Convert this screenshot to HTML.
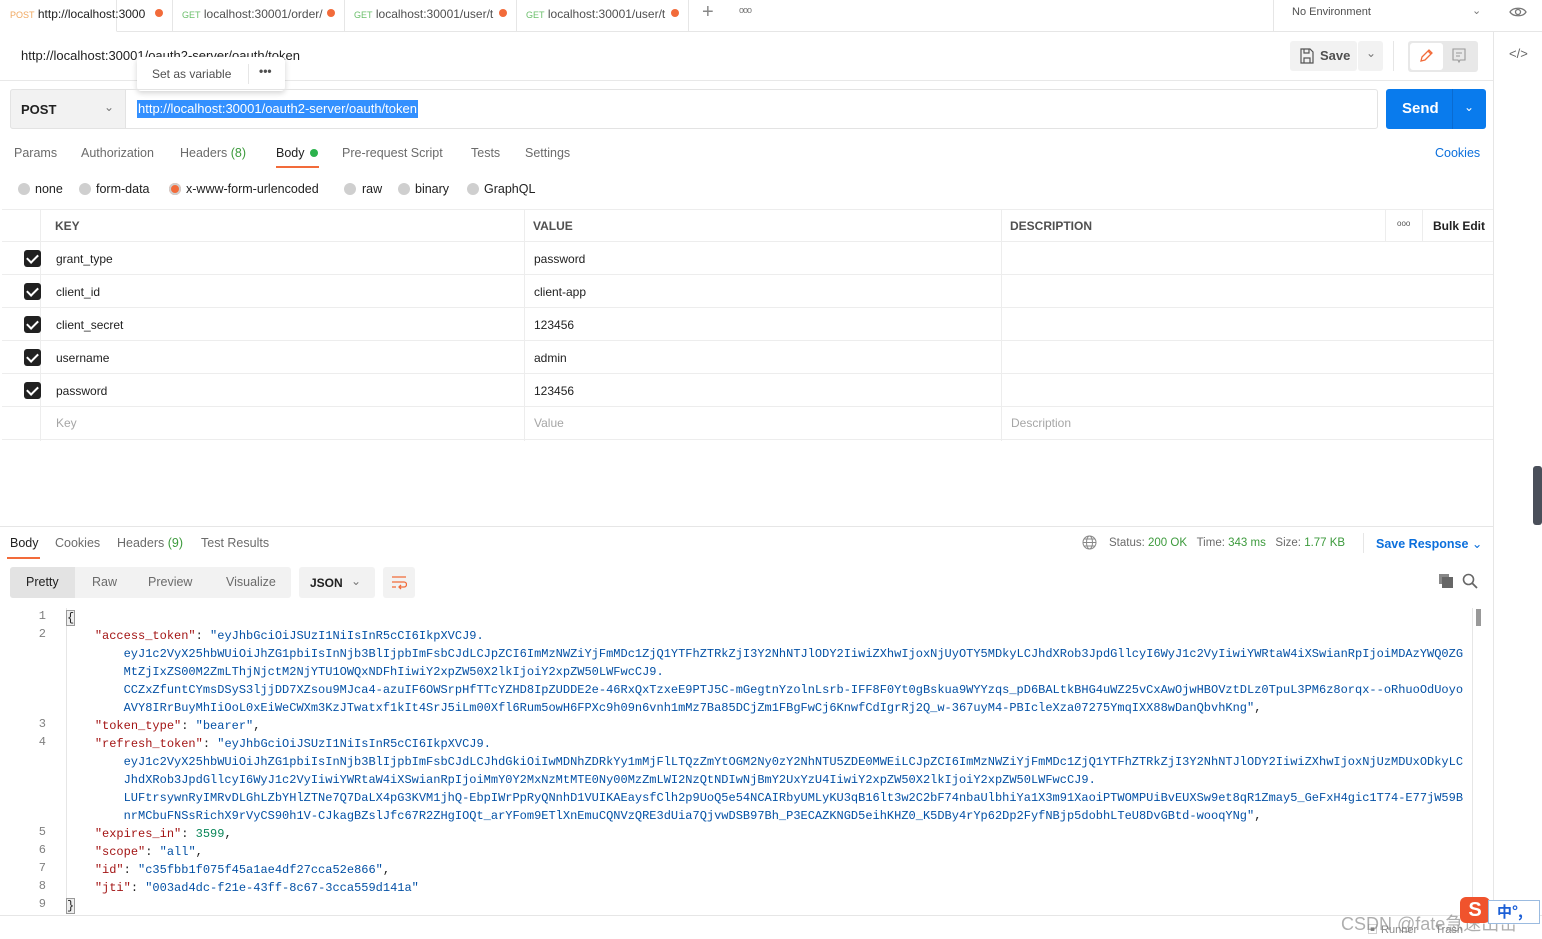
<!DOCTYPE html>
<html><head><meta charset="utf-8"><style>
*{box-sizing:border-box;margin:0;padding:0}
body{width:1542px;height:939px;overflow:hidden;background:#fff;font-family:"Liberation Sans","Noto Sans CJK SC",sans-serif;font-size:12px;color:#505050;position:relative}
.a{position:absolute;white-space:nowrap}
.code{font-family:"Liberation Mono",monospace;font-size:12px;line-height:18px;color:#0451a5}
.k{color:#a31515}.n{color:#098658}.p{color:#212121}
.ln{position:absolute;left:20px;width:26px;text-align:right;font-family:"Liberation Mono",monospace;font-size:12px;color:#808080}
.row{position:absolute;left:2px;width:1491px;height:33px;border-bottom:1px solid #ededed}
.cb{position:absolute;left:24px;top:8px;width:17px;height:17px;background:#212121;border-radius:3px}
.cb:after{content:"";position:absolute;left:5px;top:2px;width:5px;height:9px;border:solid #fff;border-width:0 2px 2px 0;transform:rotate(45deg)}
.radio{position:absolute;top:183px;width:12px;height:12px;border-radius:50%;background:#cfcfcf}
.rl{position:absolute;top:182px;font-size:12.5px;color:#212121;white-space:nowrap}
</style></head><body>
<!-- tab bar -->
<div class="a" style="left:0;top:0;width:1542px;height:32px;border-bottom:1px solid #e6e6e6"></div>
<div class="a" style="left:0;top:0;width:117px;height:32px;background:#fff;border-right:1px solid #e6e6e6;border-bottom:1px solid #fff"></div>
<div class="a" style="left:10px;top:7px;font-size:12px"><span style="color:#f0a860;font-size:9px">POST</span> <span style="color:#212121">http://localhost:3000</span></div>
<div class="a" style="left:155px;top:9px;width:8px;height:8px;border-radius:50%;background:#f26b3a"></div>
<div class="a" style="left:172px;top:0;width:1px;height:32px;background:#e6e6e6"></div>
<div class="a" style="left:182px;top:7px"><span style="color:#6bbf6b;font-size:9px">GET</span> localhost:30001/order/</div>
<div class="a" style="left:327px;top:9px;width:8px;height:8px;border-radius:50%;background:#f26b3a"></div>
<div class="a" style="left:344px;top:0;width:1px;height:32px;background:#e6e6e6"></div>
<div class="a" style="left:354px;top:7px"><span style="color:#6bbf6b;font-size:9px">GET</span> localhost:30001/user/t</div>
<div class="a" style="left:499px;top:9px;width:8px;height:8px;border-radius:50%;background:#f26b3a"></div>
<div class="a" style="left:516px;top:0;width:1px;height:32px;background:#e6e6e6"></div>
<div class="a" style="left:526px;top:7px"><span style="color:#6bbf6b;font-size:9px">GET</span> localhost:30001/user/t</div>
<div class="a" style="left:671px;top:9px;width:8px;height:8px;border-radius:50%;background:#f26b3a"></div>
<div class="a" style="left:688px;top:0;width:1px;height:32px;background:#e6e6e6"></div>
<div class="a" style="left:702px;top:1px;font-size:20px;color:#888">+</div>
<div class="a" style="left:739px;top:5px;font-size:9px;color:#777;letter-spacing:-1px">ooo</div>
<div class="a" style="left:1273px;top:0;width:1px;height:32px;background:#e6e6e6"></div>
<div class="a" style="left:1292px;top:6px;font-size:11px;color:#505050">No Environment</div>
<div class="a" style="left:1472px;top:4px;font-size:11px;color:#777">⌄</div>
<svg class="a" style="left:1509px;top:5px" width="18" height="14" viewBox="0 0 18 14"><path d="M1 7C4 2 14 2 17 7C14 12 4 12 1 7Z" fill="none" stroke="#777" stroke-width="1.3"/><circle cx="9" cy="7" r="2.5" fill="none" stroke="#777" stroke-width="1.3"/></svg>
<!-- right sidebar -->
<div class="a" style="left:1493px;top:32px;width:1px;height:907px;background:#e6e6e6"></div>
<div class="a" style="left:1509px;top:46px;font-size:13px;color:#666">&lt;/&gt;</div>
<div class="a" style="left:1533px;top:466px;width:9px;height:59px;background:#4a4f5a;border-radius:3px"></div>
<!-- title row -->
<div class="a" style="left:0;top:80px;width:1493px;height:1px;background:#e8e8e8"></div>
<div class="a" style="left:21px;top:48px;font-size:13px;color:#212121">http://localhost:30001/oauth2-server/oauth/token</div>
<div class="a" style="left:137px;top:57px;width:148px;height:34px;background:#fff;border-radius:4px;box-shadow:0 2px 6px rgba(0,0,0,.18)"></div>
<div class="a" style="left:152px;top:67px;color:#505050">Set as variable</div>
<div class="a" style="left:248px;top:64px;width:1px;height:20px;background:#e6e6e6"></div>
<div class="a" style="left:259px;top:64px;font-weight:bold;color:#505050">•••</div>
<div class="a" style="left:1290px;top:41px;width:67px;height:30px;background:#f2f2f2;border-radius:3px"></div>
<svg class="a" style="left:1300px;top:48px" width="14" height="16" viewBox="0 0 14 16"><path d="M1 1H10L13 4V15H1Z M4 1V5H9V1 M4 15V10H10V15" fill="none" stroke="#555" stroke-width="1.2"/></svg>
<div class="a" style="left:1320px;top:48px;font-size:13px;color:#505050;font-weight:bold">Save</div>
<div class="a" style="left:1358px;top:41px;width:25px;height:30px;background:#f2f2f2;border-radius:3px"></div>
<div class="a" style="left:1366px;top:46px;color:#777">⌄</div>
<div class="a" style="left:1393px;top:41px;width:1px;height:30px;background:#e6e6e6"></div>
<div class="a" style="left:1408px;top:41px;width:70px;height:31px;background:#e8e8e8;border-radius:3px"></div>
<div class="a" style="left:1410px;top:43px;width:33px;height:27px;background:#fff;border-radius:3px"></div>
<svg class="a" style="left:1418px;top:48px" width="16" height="16" viewBox="0 0 16 16"><path d="M3 13L4 9L11 2L14 5L7 12Z M10 3L13 6" fill="none" stroke="#f26b3a" stroke-width="1.3"/></svg>
<svg class="a" style="left:1451px;top:48px" width="16" height="16" viewBox="0 0 16 16"><path d="M2 1H14V12H9L8 14L7 12H2Z M5 5H11M5 8H9" fill="none" stroke="#999" stroke-width="1.1"/></svg>
<!-- url row -->
<div class="a" style="left:10px;top:89px;width:1368px;height:40px;border:1px solid #e3e3e3;border-radius:3px"></div>
<div class="a" style="left:10px;top:89px;width:116px;height:40px;background:#f2f2f2;border:1px solid #e3e3e3;border-radius:3px 0 0 3px"></div>
<div class="a" style="left:21px;top:102px;font-size:13px;color:#212121;font-weight:bold">POST</div>
<div class="a" style="left:104px;top:100px;color:#777">⌄</div>
<div class="a" style="left:137px;top:100px;height:18px;line-height:18px;font-size:13px;color:#fff;background:#3390ff;padding:0 1px">http://localhost:30001/oauth2-server/oauth/token</div>
<div class="a" style="left:1386px;top:89px;width:100px;height:40px;background:#097bed;border-radius:3px"></div>
<div class="a" style="left:1452px;top:89px;width:1px;height:40px;background:#0a6bd0"></div>
<div class="a" style="left:1402px;top:100px;font-size:15px;color:#fff;font-weight:bold">Send</div>
<div class="a" style="left:1464px;top:100px;color:#fff">⌄</div>
<!-- request tabs -->
<div class="a" style="left:14px;top:146px;font-size:12.5px;color:#6b6b6b">Params</div>
<div class="a" style="left:81px;top:146px;font-size:12.5px;color:#6b6b6b">Authorization</div>
<div class="a" style="left:180px;top:146px;font-size:12.5px;color:#6b6b6b">Headers <span style="color:#3c9a3c">(8)</span></div>
<div class="a" style="left:276px;top:146px;font-size:12.5px;color:#212121">Body</div>
<div class="a" style="left:310px;top:149px;width:8px;height:8px;border-radius:50%;background:#2bb24c"></div>
<div class="a" style="left:276px;top:166px;width:43px;height:2px;background:#f26b3a"></div>
<div class="a" style="left:342px;top:146px;font-size:12.5px;color:#6b6b6b">Pre-request Script</div>
<div class="a" style="left:471px;top:146px;font-size:12.5px;color:#6b6b6b">Tests</div>
<div class="a" style="left:525px;top:146px;font-size:12.5px;color:#6b6b6b">Settings</div>
<div class="a" style="left:1435px;top:146px;font-size:12.5px;color:#0b6fdc">Cookies</div>
<div class="radio" style="left:18px"></div><div class="rl" style="left:35px">none</div>
<div class="radio" style="left:79px"></div><div class="rl" style="left:96px">form-data</div>
<div class="radio" style="left:169px;background:#f26b3a;box-shadow:inset 0 0 0 2px #cfcfcf"></div><div class="rl" style="left:186px">x-www-form-urlencoded</div>
<div class="radio" style="left:344px"></div><div class="rl" style="left:362px">raw</div>
<div class="radio" style="left:398px"></div><div class="rl" style="left:415px">binary</div>
<div class="radio" style="left:467px"></div><div class="rl" style="left:484px">GraphQL</div>
<!-- table -->
<div class="row" style="top:209px;border-top:1px solid #ededed"></div>
<div class="row" style="top:242px"></div><div class="row" style="top:275px"></div><div class="row" style="top:308px"></div><div class="row" style="top:341px"></div><div class="row" style="top:374px"></div><div class="row" style="top:407px"></div>
<div class="a" style="left:40px;top:209px;width:1px;height:232px;background:#ededed"></div>
<div class="a" style="left:524px;top:209px;width:1px;height:232px;background:#ededed"></div>
<div class="a" style="left:1001px;top:209px;width:1px;height:232px;background:#ededed"></div>
<div class="a" style="left:1385px;top:209px;width:1px;height:33px;background:#ededed"></div>
<div class="a" style="left:1422px;top:209px;width:1px;height:33px;background:#ededed"></div>
<div class="a" style="left:55px;top:219px;font-weight:bold;color:#505050">KEY</div>
<div class="a" style="left:533px;top:219px;font-weight:bold;color:#505050">VALUE</div>
<div class="a" style="left:1010px;top:219px;font-weight:bold;color:#505050">DESCRIPTION</div>
<div class="a" style="left:1397px;top:219px;font-size:8px;color:#555">ooo</div>
<div class="a" style="left:1433px;top:219px;font-weight:bold;color:#212121">Bulk Edit</div>
<div class="cb" style="top:250px"></div><div class="cb" style="top:283px"></div><div class="cb" style="top:316px"></div><div class="cb" style="top:349px"></div><div class="cb" style="top:382px"></div>
<div class="a" style="left:56px;top:252px;color:#212121">grant_type</div><div class="a" style="left:534px;top:252px;color:#212121">password</div>
<div class="a" style="left:56px;top:285px;color:#212121">client_id</div><div class="a" style="left:534px;top:285px;color:#212121">client-app</div>
<div class="a" style="left:56px;top:318px;color:#212121">client_secret</div><div class="a" style="left:534px;top:318px;color:#212121">123456</div>
<div class="a" style="left:56px;top:351px;color:#212121">username</div><div class="a" style="left:534px;top:351px;color:#212121">admin</div>
<div class="a" style="left:56px;top:384px;color:#212121">password</div><div class="a" style="left:534px;top:384px;color:#212121">123456</div>
<div class="a" style="left:56px;top:416px;color:#a6a6a6">Key</div><div class="a" style="left:534px;top:416px;color:#a6a6a6">Value</div><div class="a" style="left:1011px;top:416px;color:#a6a6a6">Description</div>
<!-- response -->
<div class="a" style="left:0;top:526px;width:1493px;height:1px;background:#e6e6e6"></div>
<div class="a" style="left:10px;top:536px;font-size:12.5px;color:#212121">Body</div>
<div class="a" style="left:7px;top:557px;width:33px;height:2px;background:#f26b3a"></div>
<div class="a" style="left:55px;top:536px;font-size:12.5px;color:#6b6b6b">Cookies</div>
<div class="a" style="left:117px;top:536px;font-size:12.5px;color:#6b6b6b">Headers <span style="color:#3c9a3c">(9)</span></div>
<div class="a" style="left:201px;top:536px;font-size:12.5px;color:#6b6b6b">Test Results</div>
<svg class="a" style="left:1082px;top:535px" width="15" height="15" viewBox="0 0 15 15"><circle cx="7.5" cy="7.5" r="6.5" fill="none" stroke="#888"/><ellipse cx="7.5" cy="7.5" rx="3" ry="6.5" fill="none" stroke="#888"/><path d="M1 7.5H14M2 4H13M2 11H13" stroke="#888"/></svg>
<div class="a" style="left:1109px;top:537px;font-size:11.5px;color:#6b6b6b">Status: <span style="color:#3c9a3c">200 OK</span> &nbsp;&nbsp;Time: <span style="color:#3c9a3c">343 ms</span> &nbsp;&nbsp;Size: <span style="color:#3c9a3c">1.77 KB</span></div>
<div class="a" style="left:1363px;top:533px;width:1px;height:20px;background:#e6e6e6"></div>
<div class="a" style="left:1376px;top:536px;font-size:12.5px;color:#0b6fdc;font-weight:bold">Save Response <span style="font-weight:normal">⌄</span></div>
<div class="a" style="left:10px;top:567px;width:281px;height:31px;background:#f2f2f2;border-radius:3px"></div>
<div class="a" style="left:10px;top:567px;width:65px;height:31px;background:#e3e3e3;border-radius:3px 0 0 3px"></div>
<div class="a" style="left:26px;top:575px;font-size:12.5px;color:#212121">Pretty</div>
<div class="a" style="left:92px;top:575px;font-size:12.5px;color:#6b6b6b">Raw</div>
<div class="a" style="left:148px;top:575px;font-size:12.5px;color:#6b6b6b">Preview</div>
<div class="a" style="left:226px;top:575px;font-size:12.5px;color:#6b6b6b">Visualize</div>
<div class="a" style="left:299px;top:567px;width:76px;height:31px;background:#f2f2f2;border-radius:3px"></div>
<div class="a" style="left:310px;top:576px;font-size:12px;color:#212121;font-weight:bold">JSON</div>
<div class="a" style="left:351px;top:574px;color:#777">⌄</div>
<div class="a" style="left:383px;top:567px;width:32px;height:31px;background:#f2f2f2;border-radius:3px"></div>
<svg class="a" style="left:391px;top:575px" width="16" height="15" viewBox="0 0 16 15"><path d="M1 2H15M1 7H13A2.5 2.5 0 0 1 13 12H8M10 10L8 12L10 14M1 12H5" fill="none" stroke="#f26b3a" stroke-width="1.3"/></svg>
<svg class="a" style="left:1438px;top:573px" width="16" height="16" viewBox="0 0 16 16"><rect x="1" y="1" width="10" height="10" fill="#888"/><rect x="4" y="4" width="11" height="11" fill="#666"/></svg>
<svg class="a" style="left:1462px;top:573px" width="16" height="16" viewBox="0 0 16 16"><circle cx="6.5" cy="6.5" r="5" fill="none" stroke="#666" stroke-width="1.6"/><path d="M10 10L15 15" stroke="#666" stroke-width="1.8"/></svg>
<!-- code -->
<div class="a" style="left:66px;top:608px;width:1px;height:300px;background:#e6e6e6"></div>
<div class="a" style="left:1472px;top:608px;width:1px;height:300px;background:#e6e6e6"></div>
<div class="a" style="left:1476px;top:609px;width:5px;height:17px;background:#999"></div>
<div class="ln" style="top:609px">1</div><div class="ln" style="top:627px">2</div><div class="ln" style="top:717px">3</div><div class="ln" style="top:735px">4</div><div class="ln" style="top:825px">5</div><div class="ln" style="top:843px">6</div><div class="ln" style="top:861px">7</div><div class="ln" style="top:879px">8</div><div class="ln" style="top:897px">9</div>
<div class="a code" style="left:66px;top:609px"><span class="p" style="border:1px solid #999;background:#eee">{</span><br>
&nbsp;&nbsp;&nbsp;&nbsp;<span class="k">"access_token"</span><span class="p">: </span>"eyJhbGciOiJSUzI1NiIsInR5cCI6IkpXVCJ9.<br>
&nbsp;&nbsp;&nbsp;&nbsp;&nbsp;&nbsp;&nbsp;&nbsp;eyJ1c2VyX25hbWUiOiJhZG1pbiIsInNjb3BlIjpbImFsbCJdLCJpZCI6ImMzNWZiYjFmMDc1ZjQ1YTFhZTRkZjI3Y2NhNTJlODY2IiwiZXhwIjoxNjUyOTY5MDkyLCJhdXRob3JpdGllcyI6WyJ1c2VyIiwiYWRtaW4iXSwianRpIjoiMDAzYWQ0ZG<br>
&nbsp;&nbsp;&nbsp;&nbsp;&nbsp;&nbsp;&nbsp;&nbsp;MtZjIxZS00M2ZmLThjNjctM2NjYTU1OWQxNDFhIiwiY2xpZW50X2lkIjoiY2xpZW50LWFwcCJ9.<br>
&nbsp;&nbsp;&nbsp;&nbsp;&nbsp;&nbsp;&nbsp;&nbsp;CCZxZfuntCYmsDSyS3ljjDD7XZsou9MJca4-azuIF6OWSrpHfTTcYZHD8IpZUDDE2e-46RxQxTzxeE9PTJ5C-mGegtnYzolnLsrb-IFF8F0Yt0gBskua9WYYzqs_pD6BALtkBHG4uWZ25vCxAwOjwHBOVztDLz0TpuL3PM6z8orqx--oRhuoOdUoyo<br>
&nbsp;&nbsp;&nbsp;&nbsp;&nbsp;&nbsp;&nbsp;&nbsp;AVY8IRrBuyMhIiOoL0xEiWeCWXm3KzJTwatxf1kIt4SrJ5iLm00Xfl6Rum5owH6FPXc9h09n6vnh1mMz7Ba85DCjZm1FBgFwCj6KnwfCdIgrRj2Q_w-367uyM4-PBIcleXza07275YmqIXX88wDanQbvhKng"<span class="p">,</span><br>
&nbsp;&nbsp;&nbsp;&nbsp;<span class="k">"token_type"</span><span class="p">: </span>"bearer"<span class="p">,</span><br>
&nbsp;&nbsp;&nbsp;&nbsp;<span class="k">"refresh_token"</span><span class="p">: </span>"eyJhbGciOiJSUzI1NiIsInR5cCI6IkpXVCJ9.<br>
&nbsp;&nbsp;&nbsp;&nbsp;&nbsp;&nbsp;&nbsp;&nbsp;eyJ1c2VyX25hbWUiOiJhZG1pbiIsInNjb3BlIjpbImFsbCJdLCJhdGkiOiIwMDNhZDRkYy1mMjFlLTQzZmYtOGM2Ny0zY2NhNTU5ZDE0MWEiLCJpZCI6ImMzNWZiYjFmMDc1ZjQ1YTFhZTRkZjI3Y2NhNTJlODY2IiwiZXhwIjoxNjUzMDUxODkyLC<br>
&nbsp;&nbsp;&nbsp;&nbsp;&nbsp;&nbsp;&nbsp;&nbsp;JhdXRob3JpdGllcyI6WyJ1c2VyIiwiYWRtaW4iXSwianRpIjoiMmY0Y2MxNzMtMTE0Ny00MzZmLWI2NzQtNDIwNjBmY2UxYzU4IiwiY2xpZW50X2lkIjoiY2xpZW50LWFwcCJ9.<br>
&nbsp;&nbsp;&nbsp;&nbsp;&nbsp;&nbsp;&nbsp;&nbsp;LUFtrsywnRyIMRvDLGhLZbYHlZTNe7Q7DaLX4pG3KVM1jhQ-EbpIWrPpRyQNnhD1VUIKAEaysfClh2p9UoQ5e54NCAIRbyUMLyKU3qB16lt3w2C2bF74nbaUlbhiYa1X3m91XaoiPTWOMPUiBvEUXSw9et8qR1Zmay5_GeFxH4gic1T74-E77jW59B<br>
&nbsp;&nbsp;&nbsp;&nbsp;&nbsp;&nbsp;&nbsp;&nbsp;nrMCbuFNSsRichX9rVyCS90h1V-CJkagBZslJfc67R2ZHgIOQt_arYFom9ETlXnEmuCQNVzQRE3dUia7QjvwDSB97Bh_P3ECAZKNGD5eihKHZ0_K5DBy4rYp62Dp2FyfNBjp5dobhLTeU8DvGBtd-wooqYNg"<span class="p">,</span><br>
&nbsp;&nbsp;&nbsp;&nbsp;<span class="k">"expires_in"</span><span class="p">: </span><span class="n">3599</span><span class="p">,</span><br>
&nbsp;&nbsp;&nbsp;&nbsp;<span class="k">"scope"</span><span class="p">: </span>"all"<span class="p">,</span><br>
&nbsp;&nbsp;&nbsp;&nbsp;<span class="k">"id"</span><span class="p">: </span>"c35fbb1f075f45a1ae4df27cca52e866"<span class="p">,</span><br>
&nbsp;&nbsp;&nbsp;&nbsp;<span class="k">"jti"</span><span class="p">: </span>"003ad4dc-f21e-43ff-8c67-3cca559d141a"<br>
<span class="p" style="border:1px solid #999;background:#eee">}</span></div>
<!-- footer -->
<div class="a" style="left:0;top:915px;width:1542px;height:24px;background:#fff;border-top:1px solid #e6e6e6"></div>
<div class="a" style="left:1367px;top:921px;font-size:11px;color:#888">▣ Runner &nbsp;&nbsp;&nbsp;&nbsp; Trash</div>
<div class="a" style="left:1341px;top:910px;font-size:18px;color:rgba(120,120,120,.6)">CSDN @fate急速出击</div>
<div class="a" style="left:1460px;top:897px;width:30px;height:26px;background:#f0532d;border-radius:6px;color:#fff;font-weight:bold;font-size:20px;text-align:center;line-height:26px">S</div>
<div class="a" style="left:1488px;top:900px;width:52px;height:24px;border:1px solid #9bbbe0;background:#fff;color:#1b5fd6;font-size:15px;font-weight:bold;padding-left:8px;font-family:'Noto Sans CJK SC',sans-serif">中°,</div>
</body></html>
